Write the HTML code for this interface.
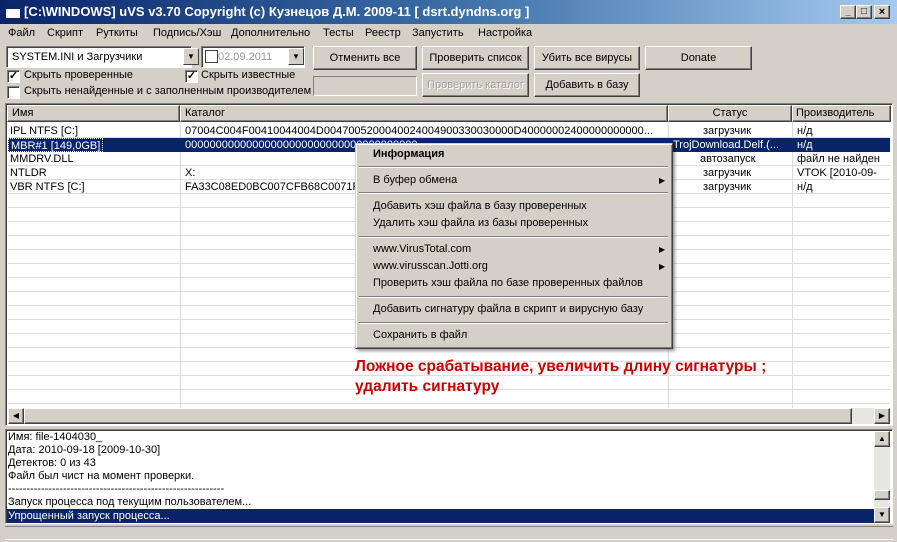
<!DOCTYPE html>
<html><head><meta charset="utf-8"><style>
*{box-sizing:border-box;margin:0;padding:0}
body{width:897px;height:542px;overflow:hidden;background:#d4d0c8;font-family:"Liberation Sans",sans-serif;font-size:11px;color:#000;position:relative}
.a{position:absolute;white-space:nowrap}
.title{left:0;top:0;width:897px;height:24px;background:linear-gradient(90deg,#0a246a,#3a6ea5 50%,#a6caf0);color:#fff;font-weight:bold;font-size:13px;line-height:24px;padding-left:24px}
.btn{position:absolute;background:#d4d0c8;border:1px solid;border-color:#fff #404040 #404040 #fff;box-shadow:inset -1px -1px #808080;text-align:center;font-size:11px}
.sunk{position:absolute;background:#fff;border:1px solid;border-color:#808080 #fff #fff #808080;box-shadow:inset 1px 1px #404040}
.cb{position:absolute;width:13px;height:13px;background:#fff;border:1px solid;border-color:#808080 #fff #fff #808080;box-shadow:inset 1px 1px #404040;font-size:11px;line-height:11px;text-align:center;font-weight:bold}
.dd{position:absolute;width:16px;height:17px;background:#d4d0c8;border:1px solid;border-color:#fff #404040 #404040 #fff;font-size:8px;text-align:center;line-height:15px}
.hl{position:absolute;left:8px;width:882px;height:1px;background:#ddd}
.vl{position:absolute;top:122px;width:1px;height:286px;background:#ddd}
.row{position:absolute;height:14px;line-height:14px}
.mi{position:absolute;left:373px}
.sep{position:absolute;left:359px;width:309px;height:2px;border-top:1px solid #808080;border-bottom:1px solid #fff}
.arr{position:absolute;left:659px;font-size:8px}
</style></head><body>
<div class="a title">[C:\WINDOWS] uVS v3.70 Copyright (c) Кузнецов Д.М. 2009-11 [ dsrt.dyndns.org ]</div>
<div class="a" style="left:6px;top:7px;width:14px;height:11px;background:#fff;border-top:2px solid #0a246a"></div>
<div class="btn" style="left:840px;top:5px;width:16px;height:14px;font-size:9px;line-height:12px;font-weight:bold">_</div>
<div class="btn" style="left:856px;top:5px;width:16px;height:14px;font-size:10px;line-height:12px">□</div>
<div class="btn" style="left:874px;top:5px;width:16px;height:14px;font-size:11px;line-height:12px;font-weight:bold">×</div>
<div class="a" style="left:0;top:24px;width:897px;height:18px;line-height:18px;word-spacing:0">
<span class="a" style="left:8px">Файл</span><span class="a" style="left:47px">Скрипт</span><span class="a" style="left:96px">Руткиты</span><span class="a" style="left:153px">Подпись/Хэш</span><span class="a" style="left:231px">Дополнительно</span><span class="a" style="left:323px">Тесты</span><span class="a" style="left:365px">Реестр</span><span class="a" style="left:412px">Запустить</span><span class="a" style="left:478px">Настройка</span></div>
<div class="sunk" style="left:6px;top:46px;width:186px;height:22px"><span class="a" style="left:5px;top:4px">SYSTEM.INI и Загрузчики</span><div class="dd" style="left:176px;top:1px;width:16px">▼</div></div>
<div class="sunk" style="left:201px;top:46px;width:104px;height:22px"><div class="a" style="left:3px;top:3px;width:13px;height:13px;border:1px solid #404040;border-style:solid"></div><span class="a" style="left:16px;top:4px;color:#999">02.09.2011</span><div class="dd" style="left:86px;top:1px">▼</div></div>
<div class="btn" style="left:313px;top:46px;width:104px;height:24px;line-height:22px">Отменить все</div>
<div class="btn" style="left:422px;top:46px;width:107px;height:24px;line-height:22px">Проверить список</div>
<div class="btn" style="left:534px;top:46px;width:106px;height:24px;line-height:22px">Убить все вирусы</div>
<div class="btn" style="left:645px;top:46px;width:107px;height:24px;line-height:22px">Donate</div>
<div class="cb" style="left:7px;top:70px">✓</div><span class="a" style="left:24px;top:69px">Скрыть проверенные</span>
<div class="cb" style="left:185px;top:70px">✓</div><span class="a" style="left:201px;top:69px">Скрыть известные</span>
<div class="cb" style="left:7px;top:86px"></div><span class="a" style="left:24px;top:85px">Скрыть ненайденные и с заполненным производителем</span>
<div class="a" style="left:313px;top:76px;width:104px;height:20px;border:1px solid;border-color:#808080 #fff #fff #808080"></div>
<div class="btn" style="left:422px;top:73px;width:107px;height:24px;line-height:22px;color:#a0a0a0;text-shadow:1px 1px #fff">Проверить каталог</div>
<div class="btn" style="left:534px;top:73px;width:106px;height:24px;line-height:22px">Добавить в базу</div>
<!-- list -->
<div class="sunk" style="left:5px;top:103px;width:888px;height:323px"></div>
<div class="a" style="left:7px;top:105px;width:884px;height:17px;line-height:16px">
<div class="btn" style="left:0;top:0;width:173px;height:17px;text-align:left;padding-left:4px;line-height:15px">Имя</div>
<div class="btn" style="left:173px;top:0;width:488px;height:17px;text-align:left;padding-left:4px;line-height:15px">Каталог</div>
<div class="btn" style="left:661px;top:0;width:124px;height:17px;line-height:15px">Статус</div>
<div class="btn" style="left:785px;top:0;width:99px;height:17px;text-align:left;padding-left:3px;line-height:15px">Производитель</div></div>
<div class="hl" style="top:137px"></div><div class="hl" style="top:151px"></div><div class="hl" style="top:165px"></div><div class="hl" style="top:179px"></div><div class="hl" style="top:193px"></div><div class="hl" style="top:207px"></div><div class="hl" style="top:221px"></div><div class="hl" style="top:235px"></div><div class="hl" style="top:249px"></div><div class="hl" style="top:263px"></div><div class="hl" style="top:277px"></div><div class="hl" style="top:291px"></div><div class="hl" style="top:305px"></div><div class="hl" style="top:319px"></div><div class="hl" style="top:333px"></div><div class="hl" style="top:347px"></div><div class="hl" style="top:361px"></div><div class="hl" style="top:375px"></div><div class="hl" style="top:389px"></div><div class="hl" style="top:403px"></div>
<div class="vl" style="left:180px"></div><div class="vl" style="left:668px"></div><div class="vl" style="left:792px"></div>
<div class="row" style="left:8px;top:138px;width:882px;background:#0a246a"></div>
<div class="row" style="left:10px;top:124px">IPL NTFS [C:]</div><div class="row" style="left:185px;top:124px">07004C004F00410044004D0047005200040024004900330030000D40000002400000000000...</div><div class="row" style="left:703px;top:124px">загрузчик</div><div class="row" style="left:797px;top:124px">н/д</div>
<div class="row" style="left:10px;top:138px;color:#fff;border:1px dotted #fff;padding:0 2px;left:8px">MBR#1 [149,0GB]</div><div class="row" style="left:185px;top:138px;color:#fff">00000000000000000000000000000000000000</div><div class="row" style="left:673px;top:138px;color:#fff">TrojDownload.Delf.(...</div><div class="row" style="left:797px;top:138px;color:#fff">н/д</div>
<div class="row" style="left:10px;top:152px">MMDRV.DLL</div><div class="row" style="left:700px;top:152px">автозапуск</div><div class="row" style="left:797px;top:152px">файл не найден</div>
<div class="row" style="left:10px;top:166px">NTLDR</div><div class="row" style="left:185px;top:166px">X:</div><div class="row" style="left:703px;top:166px">загрузчик</div><div class="row" style="left:797px;top:166px;width:93px;overflow:hidden">VTOK [2010-09-18]</div>
<div class="row" style="left:10px;top:180px">VBR NTFS [C:]</div><div class="row" style="left:185px;top:180px">FA33C08ED0BC007CFB68C0071F1</div><div class="row" style="left:703px;top:180px">загрузчик</div><div class="row" style="left:797px;top:180px">н/д</div>
<!-- hscroll -->
<div class="a" style="left:8px;top:408px;width:882px;height:16px;background:#e8e6e0"></div>
<div class="btn" style="left:8px;top:408px;width:16px;height:16px;font-size:8px;line-height:14px">◀</div>
<div class="btn" style="left:24px;top:408px;width:828px;height:16px"></div>
<div class="btn" style="left:874px;top:408px;width:16px;height:16px;font-size:8px;line-height:14px">▶</div>
<!-- log -->
<div class="sunk" style="left:5px;top:429px;width:888px;height:95px"></div>
<div class="a" style="left:8px;top:431px;line-height:13px">Имя: file-1404030_<br>Дата: 2010-09-18 [2009-10-30]<br>Детектов: 0 из 43<br>Файл был чист на момент проверки.<br>-----------------------------------------------------------<br>Запуск процесса под текущим пользователем...</div>
<div class="a" style="left:7px;top:509px;width:867px;height:14px;background:#0a246a;color:#fff;padding-left:1px;line-height:14px">Упрощенный запуск процесса...</div>
<div class="a" style="left:874px;top:431px;width:16px;height:92px;background:#e8e6e0"></div>
<div class="btn" style="left:874px;top:431px;width:16px;height:16px;font-size:8px;line-height:14px">▲</div>
<div class="btn" style="left:874px;top:490px;width:16px;height:10px"></div>
<div class="btn" style="left:874px;top:507px;width:16px;height:16px;font-size:8px;line-height:14px">▼</div>
<div class="a" style="left:5px;top:526px;width:888px;height:14px;border-top:1px solid #808080;border-bottom:1px solid #fff"></div>
<!-- context menu -->
<div class="a" style="left:355px;top:143px;width:318px;height:206px;background:#d4d0c8;border:1px solid;border-color:#d4d0c8 #404040 #404040 #d4d0c8;box-shadow:inset 1px 1px #fff,inset -1px -1px #808080,2px 2px 3px rgba(0,0,0,.4)"></div>
<div class="mi" style="top:148px;font-weight:bold">Информация</div>
<div class="sep" style="top:166px"></div>
<div class="mi" style="top:174px">В буфер обмена</div><div class="arr" style="top:176px">▶</div>
<div class="sep" style="top:192px"></div>
<div class="mi" style="top:200px">Добавить хэш файла в базу проверенных</div>
<div class="mi" style="top:217px">Удалить хэш файла из базы проверенных</div>
<div class="sep" style="top:236px"></div>
<div class="mi" style="top:243px">www.VirusTotal.com</div><div class="arr" style="top:245px">▶</div>
<div class="mi" style="top:260px">www.virusscan.Jotti.org</div><div class="arr" style="top:262px">▶</div>
<div class="mi" style="top:277px">Проверить хэш файла по базе проверенных файлов</div>
<div class="sep" style="top:296px"></div>
<div class="mi" style="top:303px">Добавить сигнатуру файла в скрипт и вирусную базу</div>
<div class="sep" style="top:322px"></div>
<div class="mi" style="top:329px">Сохранить в файл</div>
<div class="a" style="left:355px;top:357px;color:#c00;font-weight:bold;font-size:15.5px;line-height:20px">Ложное срабатывание, увеличить длину сигнатуры ;<br>удалить сигнатуру</div>
</body></html>
